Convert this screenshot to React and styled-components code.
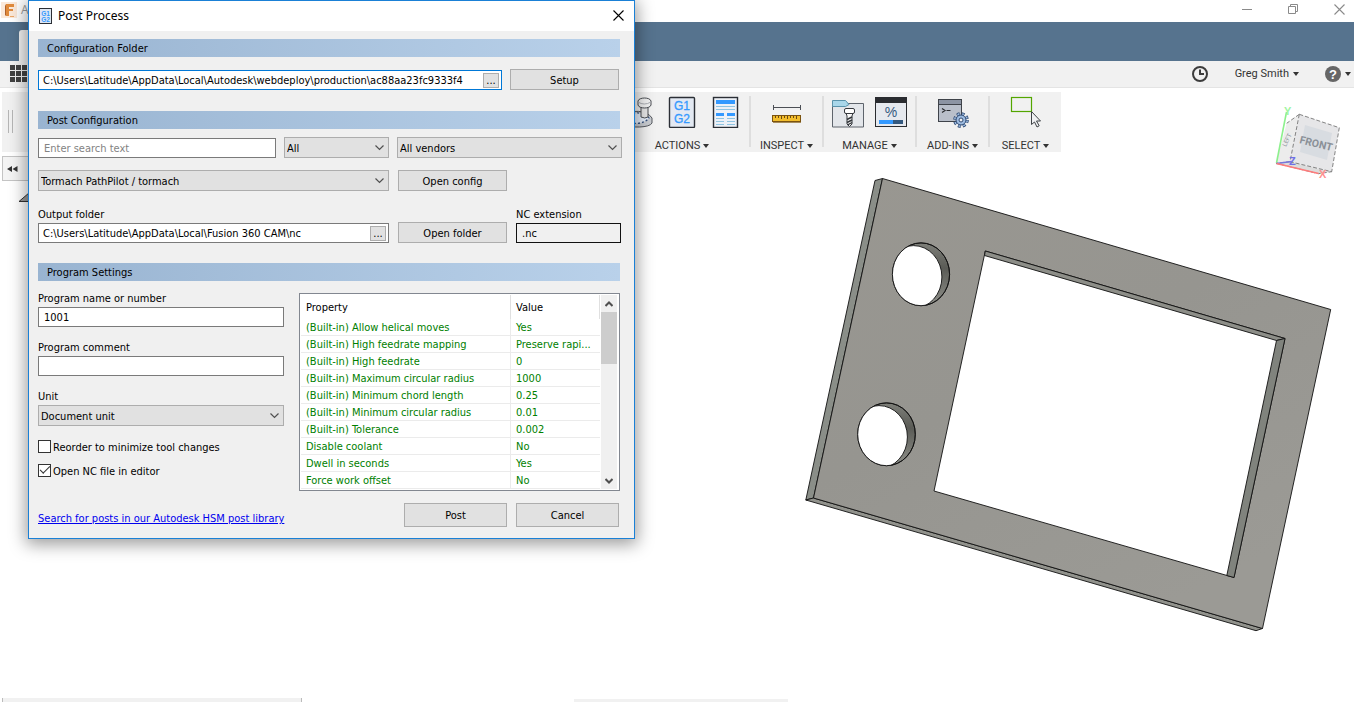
import React, { useState } from 'react'
import styled, { createGlobalStyle } from 'styled-components'

const properties = [
    { name: "(Built-in) Allow helical moves", value: "Yes" },
    { name: "(Built-in) High feedrate mapping", value: "Preserve rapi..." },
    { name: "(Built-in) High feedrate", value: "0" },
    { name: "(Built-in) Maximum circular radius", value: "1000" },
    { name: "(Built-in) Minimum chord length", value: "0.25" },
    { name: "(Built-in) Minimum circular radius", value: "0.01" },
    { name: "(Built-in) Tolerance", value: "0.002" },
    { name: "Disable coolant", value: "No" },
    { name: "Dwell in seconds", value: "Yes" },
    { name: "Force work offset", value: "No" },
]

/* icons */

const IconG1G2 = () => (
    <svg width="32" height="32" viewBox="0 0 32 32">
        <rect x="3.5" y="1.5" width="25" height="30" rx="1" fill="#e3e9f2" stroke="#2b2f36" strokeWidth="1.4" />
        <text x="16" y="14" textAnchor="middle" fontFamily="Liberation Sans, sans-serif" fontSize="12" fill="#3399ff" stroke="#3399ff" strokeWidth="0.3">G1</text>
        <text x="16" y="27" textAnchor="middle" fontFamily="Liberation Sans, sans-serif" fontSize="12" fill="#3399ff" stroke="#3399ff" strokeWidth="0.3">G2</text>
    </svg>
)

const IconDialog = () => (
    <svg width="13" height="16" viewBox="0 0 13 16">
        <rect x=".5" y=".5" width="12" height="15" fill="#dfe7f2" stroke="#2b2f36" />
        <text x="6.500" y="7.500" textAnchor="middle" fontFamily="Liberation Sans, sans-serif" fontWeight="700" fontSize="6.500" fill="#3399ff">G1</text>
        <text x="6.500" y="13.500" textAnchor="middle" fontFamily="Liberation Sans, sans-serif" fontWeight="700" fontSize="6.500" fill="#3399ff">G2</text>
    </svg>
)

const IconStamp = () => (
    <svg width="32" height="32" viewBox="0 0 32 32">
        <path d="M0 20c8-7 24-6 29 2v5c-2 5-21 5-29 2z" fill="#c9ccd1" stroke="#55585e" />
        <path d="M3 21c6-6 20-5 23 1-4 6-17 7-23 3z" fill="#e6eefa" stroke="#33507f" strokeWidth="1.300" strokeDasharray="2 2" />
        <path d="M18 10h7v11q-3 2-7 0z" fill="#e6e6e6" stroke="#4a4d52" />
        <path d="M15 5c1-4 12-4 13 0v4c-1 4-12 4-13 0z" fill="#f0f0f0" stroke="#4a4d52" />
        <path d="M15 6q6 4 13 0" fill="none" stroke="#aaadb2" />
    </svg>
)

const IconSheet = () => (
    <svg width="32" height="32" viewBox="0 0 32 32">
        <rect x="4.500" y="1.500" width="24" height="30" fill="#edf1f7" stroke="#2b2f36" strokeWidth="1.400" />
        <path d="M7 4h19v4H7zM7 17h8v3H7zM18 17h8v3h-8z" fill="#3399ff" />
        <path d="M7 10.500h19M7 13.500h19M7 22.500h8M18 22.500h8M7 25.500h8M18 25.500h8M7 28.500h8M18 28.500h8" stroke="#8fc4e2" />
    </svg>
)

const IconRuler = () => (
    <svg width="32" height="32" viewBox="0 0 32 32">
        <path d="M2 11.500h28M2.500 9v5M29.500 9v5" stroke="#4c4f55" />
        <rect x="1.500" y="19.500" width="28" height="6" fill="#f2bd2c" stroke="#7b5310" />
        <path d="M4.500 20v2M7.500 20v2M10.500 20v3M13.500 20v2M16.500 20v3M19.500 20v2M22.500 20v2M25.500 20v3" stroke="#6b4a12" />
        <path d="M2 26.500h28" stroke="#a58b5c" />
    </svg>
)

const IconToolFolder = () => (
    <svg width="32" height="32" viewBox="0 0 32 32">
        <path d="M.5 31V7.500h31V31z" fill="#e3e6ea" stroke="#5e646c" />
        <path d="M.5 8.500v-4h13l3.500 4-3.500 2H.5z" fill="#a9d7ea" stroke="#5a93ab" />
        <path d="M14 17h7l-1 3v8l-2.500 2.500L15 28v-8z" fill="#f7f7f7" stroke="#35383d" />
        <rect x="12.500" y="12.500" width="10" height="5" rx="1.500" fill="#fff" stroke="#35383d" />
        <path d="M15 23.500l5-2.500M15 26.500l5-2.500M15.500 29l4.500-2.500" stroke="#35383d" strokeWidth="1.400" />
    </svg>
)

const IconPercent = () => (
    <svg width="32" height="32" viewBox="0 0 32 32">
        <rect x=".5" y="1.500" width="31" height="29" fill="#e6e9ee" stroke="#2a2c30" />
        <path d="M0 1h32v6H0z" fill="#2a2c30" />
        <text x="16" y="21" textAnchor="middle" fontFamily="Liberation Sans, sans-serif" fontSize="14" fill="#34597f">%</text>
        <path d="M4 24h14v4H4z" fill="#3399ff" />
        <path d="M18 24h10v4H18z" fill="#34597f" />
    </svg>
)

const IconScript = () => (
    <svg width="32" height="32" viewBox="0 0 32 32">
        <rect x="1.500" y="3.500" width="23" height="22" fill="#b9bfca" stroke="#3f434a" />
        <path d="M2 4h22v4H2z" fill="#8c94a3" />
        <path d="M1 3.500h24M2 8.500h22" stroke="#3f434a" />
        <path d="M5 12.500l3 2-3 2M9.500 14.500h4" fill="none" stroke="#2a2c30" strokeWidth="1.200" />
        <circle cx="24" cy="24" r="6" fill="none" stroke="#2f4a73" strokeWidth="3.600" strokeDasharray="2.700 2.010" />
        <circle cx="24" cy="24" r="6" fill="none" stroke="#9dbbe0" strokeWidth="2" strokeDasharray="1.700 3.010" strokeDashoffset="-0.500" />
        <circle cx="24" cy="24" r="5" fill="#9dbbe0" stroke="#2f4a73" />
        <circle cx="24" cy="24" r="2" fill="#f1f1f1" stroke="#2f4a73" />
    </svg>
)

const IconSelectArrow = () => (
    <svg width="32" height="32" viewBox="0 0 32 32">
        <rect x="1.500" y="1.500" width="20" height="14" fill="none" stroke="#53a600" strokeWidth="1.200" />
        <path d="M21.500 15.500v13l3-2.500 2.500 5 2.200-1.200-2.700-4.800h4z" fill="#f0f1f3" stroke="#3f4347" />
    </svg>
)

const IconGrid = () => (
    <svg width="18" height="18" viewBox="0 0 18 18" fill="#414141">
        {[0, 6, 12].map(y => [0, 6, 12].map(x => (
            <rect key={`${x}-${y}`} x={x} y={y} width="5" height="5" />
        )))}
    </svg>
)

const IconClock = () => (
    <svg width="18" height="18" viewBox="0 0 18 18" fill="none" stroke="#3c3c3c">
        <circle cx="9" cy="9" r="7" strokeWidth="2" />
        <path d="M9 4.500v4.500h4" strokeWidth="2" />
    </svg>
)

const IconHelp = () => (
    <svg width="16" height="16" viewBox="0 0 16 16">
        <circle cx="8" cy="8" r="8" fill="#666" />
        <text x="8" y="12.500" textAnchor="middle" fontFamily="Liberation Sans, sans-serif" fontWeight="700" fontSize="13" fill="#fff">?</text>
    </svg>
)

const IconCaret = () => (
    <svg width="6" height="4" viewBox="0 0 6 4"><path d="M0 0h6L3 4z" fill="#333" /></svg>
)

const IconClose = ({ color = "#8a8a8a" }) => (
    <svg width="11" height="11" viewBox="0 0 11 11" stroke={color} strokeWidth="1.100"><path d="M.5.5l10 10M10.500.5l-10 10" /></svg>
)

const IconRestore = () => (
    <svg width="11" height="11" viewBox="0 0 11 11" fill="none" stroke="#8a8a8a">
        <path d="M.5 2.500h7v7h-7zM2.500 2.500v-2h7v7h-2" />
    </svg>
)

const IconChevron = () => (
    <svg width="9" height="6" viewBox="0 0 9 6" fill="none" stroke="#505050" strokeWidth="1.200"><path d="M.5.5l4 4 4-4" /></svg>
)

const IconScroll = ({ down }) => (
    <svg width="8" height="6" viewBox="0 0 8 6" fill="none" stroke="#505050" strokeWidth="2">
        <path d={down ? "M.5 1L4 4.500 7.500 1" : "M.5 5L4 1.500 7.500 5"} />
    </svg>
)

const IconFusion = () => (
    <svg width="16" height="16" viewBox="0 0 16 16">
        <rect width="16" height="16" fill="#fbe9da" />
        <path d="M5 2h8v3H8v2h4v2H8v5H5z" fill="#e08a3c" />
        <path d="M5 2l-1 2v9l1 1z" fill="#b0622a" />
        <path d="M9 14.500h4" stroke="#eca869" />
    </svg>
)

/* the milled face plate */
const Plate = () => (
    <PlateSvg viewBox="800 172 536 464">
        <defs>
            <linearGradient id="face" x1="0" y1="0" x2="0.600" y2="1">
                <stop offset="0" stopColor="#999791" />
                <stop offset="0.500" stopColor="#969590" />
                <stop offset="1" stopColor="#9b9a95" />
            </linearGradient>
            <linearGradient id="bore" x1="0" y1="0" x2="0" y2="1">
                <stop offset="0" stopColor="#7f807a" />
                <stop offset="0.400" stopColor="#5a5b56" />
                <stop offset="1" stopColor="#90918b" />
            </linearGradient>
            <clipPath id="boreTop"><ellipse cx="921" cy="274.300" rx="28.600" ry="31.400" /></clipPath>
            <clipPath id="boreBottom"><ellipse cx="886.500" cy="434.300" rx="28.800" ry="31.400" /></clipPath>
        </defs>
        <g stroke="#111" strokeWidth="0.900" strokeLinejoin="round">
            <path d="M875 180.500l7.500-2L813.500 498l-7.700 2z" fill="#8a8e88" />
            <path d="M805.800 500l7.700-2 449 130.500-6.500 2.200z" fill="#91928c" />
            <path fillRule="evenodd" fill="url(#face)" d="M882.500 178.500L1330.700 309.500 1262.500 628.500 813.500 498zM985.300 251L934 491l300 86.500 51-239z" />
            <path d="M985.300 251l299.700 87.500-8.500 2L984.500 255.500z" fill="#8d8e88" />
            <path d="M1285 338.500l-8.500 2L1226.800 575.500l7.200 2z" fill="#80837d" />
            <ellipse cx="921" cy="274.300" rx="28.600" ry="31.400" fill="url(#bore)" />
            <ellipse cx="913.500" cy="277" rx="28.400" ry="31.400" fill="#fff" clipPath="url(#boreTop)" />
            <ellipse cx="921" cy="274.300" rx="28.600" ry="31.400" fill="none" />
            <ellipse cx="886.500" cy="434.300" rx="28.800" ry="31.400" fill="url(#bore)" />
            <ellipse cx="879" cy="437" rx="28.400" ry="31.400" fill="#fff" clipPath="url(#boreBottom)" />
            <ellipse cx="886.500" cy="434.300" rx="28.800" ry="31.400" fill="none" />
        </g>
    </PlateSvg>
)

const ViewCube = () => (
    <CubeSvg viewBox="1272 102 72 80">
        <path d="M1299.300 114.300L1286.700 123.300 1276 163.300l14-1.600z" fill="#ececec" />
        <path d="M1276 163.300l14-1.600 41.700 10-13.300 2z" fill="#dcdcdc" />
        <path d="M1299.300 114.300l40 13.400-7.600 44L1290 161.700z" fill="#e6e6e8" />
        <path d="M1305 125l27 8-5 27-27-8z" fill="#d8dce1" />
        <g fill="none" stroke="#777" strokeWidth="0.900" strokeDasharray="4 2">
            <path d="M1299.300 114.300l40 13.400-7.600 44L1290 161.700zM1299.300 114.300L1286.700 123.300M1290 161.700l-14 1.600M1276 163.300l42.400 10.400 13.300-2" />
        </g>
        <text transform="translate(1299 143) rotate(14)" fontFamily="Roboto, sans-serif" fontWeight="700" fontSize="10.500" fill="#8a9097">FRONT</text>
        <text transform="translate(1286 147) rotate(-65)" fontFamily="Roboto, sans-serif" fontSize="6" fill="#8a9097">LEFT</text>
        <path d="M1276.500 163L1286.500 112" stroke="#8df08d" strokeWidth="1.600" />
        <path d="M1276.500 163.500l15-2" stroke="#7777dd" strokeWidth="1.600" />
        <path d="M1276.500 163.500l42 10" stroke="#ff7b7b" strokeWidth="1.600" />
        <g fontFamily="Liberation Sans, sans-serif" fontWeight="700" fontSize="11">
            <text x="1284" y="115" fill="#a0f5a0">Y</text>
            <text x="1289" y="165" fill="#7070e6">Z</text>
            <text x="1319" y="178" fill="#ff9090">X</text>
        </g>
    </CubeSvg>
)

const ToolGroup = ({ label, children }) => (
    <Group>
        <Tools>{children}</Tools>
        <GroupMenu type="button">{label} <IconCaret /></GroupMenu>
    </Group>
)

const Tool = ({ label, children }) => (
    <ToolButton type="button" aria-label={label}>{children}</ToolButton>
)

const DropDown = ({ width, label, id, options }) => (
    <SelectBox $width={width}>
        <select id={id} aria-label={label}>
            {options.map(option => <option key={option}>{option}</option>)}
        </select>
        <IconChevron />
    </SelectBox>
)

const PathField = ({ id, label, value, width, active }) => {
    const [path, setPath] = useState(value)

    return (
        <PathBox $width={width} $active={active}>
            <input id={id} aria-label={label} value={path} onChange={e => setPath(e.target.value)} />
            <BrowseButton type="button">...</BrowseButton>
        </PathBox>
    )
}

const PostDialog = () => {
    const [reorder, setReorder] = useState(false)
    const [openEditor, setOpenEditor] = useState(true)

    return (
        <Dialog role="dialog" aria-label="Post Process">
            <DialogTitle>
                <IconDialog />
                <h1>Post Process</h1>
                <button type="button" aria-label="Close"><IconClose color="#000" /></button>
            </DialogTitle>
            <DialogBody>
                <SectionTitle>Configuration Folder</SectionTitle>
                <Row $top={12}>
                    <PathField active width={464} label="Configuration folder" value="C:\Users\Latitude\AppData\Local\Autodesk\webdeploy\production\ac88aa23fc9333f4" />
                    <Button type="button">Setup</Button>
                </Row>

                <SectionTitle $top={21}>Post Configuration</SectionTitle>
                <Row $top={8}>
                    <TextInput $width={238} aria-label="Search" placeholder="Enter search text" />
                    <DropDown width={105} label="Capabilities" options={["All"]} />
                    <DropDown width={225} label="Vendors" options={["All vendors"]} />
                </Row>
                <Row $top={12} $gap={9}>
                    <DropDown width={351} label="Post processor" options={["Tormach PathPilot / tormach"]} />
                    <Button type="button">Open config</Button>
                </Row>
                <Row $top={15} $gap={9}>
                    <Field>
                        <label htmlFor="output">Output folder</label>
                        <PathField id="output" width={351} value="C:\Users\Latitude\AppData\Local\Fusion 360 CAM\nc" />
                    </Field>
                    <Button type="button">Open folder</Button>
                    <Field>
                        <label htmlFor="extension">NC extension</label>
                        <TextInput id="extension" $width={105} $locked readOnly defaultValue=".nc" />
                    </Field>
                </Row>

                <SectionTitle $top={20}>Program Settings</SectionTitle>
                <Settings>
                    <SettingsForm>
                        <Field>
                            <label htmlFor="name">Program name or number</label>
                            <TextInput id="name" defaultValue="1001" />
                        </Field>
                        <Field>
                            <label htmlFor="comment">Program comment</label>
                            <TextInput id="comment" />
                        </Field>
                        <Field>
                            <label htmlFor="unit">Unit</label>
                            <DropDown id="unit" options={["Document unit"]} />
                        </Field>
                        <CheckLabel>
                            <input type="checkbox" checked={reorder} onChange={() => setReorder(!reorder)} />
                            <span>Reorder to minimize tool changes</span>
                        </CheckLabel>
                        <CheckLabel>
                            <input type="checkbox" checked={openEditor} onChange={() => setOpenEditor(!openEditor)} />
                            <span>Open NC file in editor</span>
                        </CheckLabel>
                    </SettingsForm>
                    <PropertyList>
                        <PropertyTable>
                            <thead>
                                <tr><th>Property</th><th>Value</th></tr>
                            </thead>
                            <tbody>
                                {properties.map(property => (
                                    <tr key={property.name}>
                                        <td>{property.name}</td>
                                        <td>{property.value}</td>
                                    </tr>
                                ))}
                            </tbody>
                        </PropertyTable>
                        <ScrollBar>
                            <button type="button" aria-label="Scroll up"><IconScroll /></button>
                            <Thumb />
                            <button type="button" aria-label="Scroll down"><IconScroll down /></button>
                        </ScrollBar>
                    </PropertyList>
                </Settings>
                <DialogFooter>
                    <a href="#library">Search for posts in our Autodesk HSM post library</a>
                    <Button type="button" $large>Post</Button>
                    <Button type="button" $large>Cancel</Button>
                </DialogFooter>
            </DialogBody>
        </Dialog>
    )
}

const App = () => {
    return (
        <Window>
            <GlobalStyle />
            <TitleBar>
                <IconFusion />
                <span>A</span>
                <WindowButtons>
                    <button type="button" aria-label="Minimize">
                        <svg width="10" height="1"><path d="M0 .5h10" stroke="#8a8a8a" /></svg>
                    </button>
                    <button type="button" aria-label="Restore"><IconRestore /></button>
                    <button type="button" aria-label="Close window"><IconClose /></button>
                </WindowButtons>
            </TitleBar>
            <TabStrip><DocumentTab /></TabStrip>
            <QuickBar>
                <BarButton type="button" aria-label="Data panel"><IconGrid /></BarButton>
                <BarButton type="button" aria-label="Job status" $push><IconClock /></BarButton>
                <BarButton type="button">Greg Smith <IconCaret /></BarButton>
                <BarButton type="button" aria-label="Help"><IconHelp /><IconCaret /></BarButton>
            </QuickBar>
            <Ribbon>
                <Grip />
                <ToolGroup label="ACTIONS">
                    <Tool label="Simulate"><IconStamp /></Tool>
                    <Tool label="Post process"><IconG1G2 /></Tool>
                    <Tool label="Setup sheet"><IconSheet /></Tool>
                </ToolGroup>
                <Separator />
                <ToolGroup label="INSPECT">
                    <Tool label="Measure"><IconRuler /></Tool>
                </ToolGroup>
                <Separator />
                <ToolGroup label="MANAGE">
                    <Tool label="Tool library"><IconToolFolder /></Tool>
                    <Tool label="Task manager"><IconPercent /></Tool>
                </ToolGroup>
                <Separator />
                <ToolGroup label="ADD-INS">
                    <Tool label="Scripts and add-ins"><IconScript /></Tool>
                </ToolGroup>
                <Separator />
                <ToolGroup label="SELECT">
                    <Tool label="Select"><IconSelectArrow /></Tool>
                </ToolGroup>
            </Ribbon>
            <Canvas>
                <Browser>
                    <BrowserHead>
                        <svg width="11" height="6" viewBox="0 0 11 6" fill="#333"><path d="M5 0v6L0 3zM10.500 0v6l-5-3z" /></svg>
                    </BrowserHead>
                    <svg width="12" height="10" viewBox="0 0 12 10"><path d="M11.500.5v9H1z" fill="#999" stroke="#333" /></svg>
                </Browser>
                <Plate />
                <ViewCube />
            </Canvas>
            <BottomBar>
                <CommentsPanel />
                <NavigationBar />
            </BottomBar>
            <PostDialog />
        </Window>
    )
}

export default App

const GlobalStyle = createGlobalStyle`
    * {
        box-sizing: border-box;
    }

    body {
        margin: 0;
        background: #fff;
        color: #000;
        font: 11px/16px "DejaVu Sans Condensed", "DejaVu Sans", sans-serif;
    }

    button, input, select {
        margin: 0;
        font: inherit;
        color: inherit;
    }

    svg {
        display: block;
        flex: none;
    }
`

const Window = styled.div`
    position: relative;
    display: flex;
    flex-direction: column;
    min-height: 100vh;
    overflow: hidden;
`

const TitleBar = styled.header`
    display: flex;
    align-items: center;
    gap: 4px;
    height: 22px;
    padding: 0 0 3px 1px;
    color: #999;
    font: 12px/16px "Open Sans", sans-serif;
`

const WindowButtons = styled.div`
    display: flex;
    gap: 16px;
    margin-left: auto;

    button {
        display: flex;
        align-items: center;
        justify-content: center;
        width: 30px;
        height: 18px;
        padding: 0;
        border: 0;
        background: none;
    }
`

const TabStrip = styled.div`
    display: flex;
    align-items: flex-end;
    height: 39px;
    padding-left: 19px;
    background: #56738e;
`

const DocumentTab = styled.div`
    width: 200px;
    height: 31px;
    border-radius: 3px 3px 0 0;
    background: #f1f1f1;
`

const QuickBar = styled.nav`
    display: flex;
    align-items: center;
    gap: 26px;
    height: 27px;
    padding: 0 3px 0 10px;
    border-bottom: 1px solid #e4e4e4;
    background: #f1f1f1;
`

const BarButton = styled.button`
    display: flex;
    align-items: center;
    gap: 4px;
    margin-left: ${props => props.$push ? "auto" : "0"};
    padding: 0;
    border: 0;
    background: none;
    color: #333;
    font: 11px/14px Roboto, sans-serif;
`

const Ribbon = styled.div`
    display: flex;
    align-self: flex-start;
    height: 60px;
    margin: 4px 0 0 2px;
    background: #f1f1f1;
`

const Grip = styled.div`
    width: 5px;
    height: 23px;
    margin: 18px 602px 0 6px;
    border: solid #b5b5b5;
    border-width: 0 1px;
`

const Group = styled.section`
    display: flex;
    flex-direction: column;
    align-items: center;
    gap: 11px;
    min-width: 71px;
    padding: 4px 8px 0;
`

const Tools = styled.div`
    display: flex;
    gap: 11px;
`

const ToolButton = styled.button`
    padding: 0;
    border: 0;
    background: none;
`

const GroupMenu = styled.button`
    display: flex;
    align-items: center;
    gap: 3px;
    padding: 0;
    border: 0;
    background: none;
    color: #333;
    font: 11px/13px Roboto, sans-serif;
`

const Separator = styled.div`
    width: 2px;
    margin: 4px 0 5px;
    background: #dedede;
`

const Canvas = styled.main`
    position: relative;
    flex: 1;
    min-height: 500px;
`

const PlateSvg = styled.svg`
    position: absolute;
    top: 20px;
    right: 18px;
    width: 536px;
    height: 464px;
`

const CubeSvg = styled.svg`
    position: absolute;
    top: -50px;
    right: 10px;
    width: 72px;
    height: 80px;
`

const Browser = styled.aside`
    display: flex;
    flex-direction: column;
    gap: 11px;
    width: 240px;
    padding: 4px 0 0 2px;

    > svg {
        margin-left: 16px;
    }
`

const BrowserHead = styled.div`
    display: flex;
    align-items: center;
    height: 25px;
    padding-left: 4px;
    border: 1px solid #c4c4c4;
    background: #f4f4f4;
`

const BottomBar = styled.footer`
    display: flex;
    align-items: flex-end;
    gap: 272px;
    height: 4px;
    padding-left: 2px;
`

const CommentsPanel = styled.div`
    width: 300px;
    height: 4px;
    border: solid #bbb;
    border-width: 0 1px;
    background: #f1f1f1;
`

const NavigationBar = styled.div`
    width: 214px;
    height: 3px;
    background: #f1f1f1;
`

/* floats over the CAM workspace */
const Dialog = styled.div`
    position: absolute;
    top: 0;
    left: 28px;
    width: 607px;
    border: 1px solid #1a80d6;
    background: #f0f0f0;
    box-shadow: 0 3px 16px 2px rgba(0, 0, 0, 0.4);
`

const DialogTitle = styled.header`
    display: flex;
    align-items: center;
    gap: 6px;
    height: 30px;
    padding-left: 10px;
    background: #fff;

    h1 {
        margin: 0;
        font: 12px/16px "Noto Sans", sans-serif;
    }

    button {
        display: flex;
        align-items: center;
        justify-content: center;
        width: 31px;
        height: 28px;
        margin: 0 0 2px auto;
        padding: 0;
        border: 0;
        background: none;
    }
`

const DialogBody = styled.form`
    padding: 8px 12px 11px 9px;
`

const SectionTitle = styled.h2`
    height: 18px;
    margin: ${props => props.$top || 0}px 2px 0 0;
    padding-left: 9px;
    background: linear-gradient(to right, #99b4d1, #b9d1ea);
    font-size: 11px;
    font-weight: 400;
    line-height: 20px;
`

const Row = styled.div`
    display: flex;
    align-items: flex-end;
    gap: ${props => props.$gap || 8}px;
    margin-top: ${props => props.$top}px;
`

const Field = styled.div`
    display: flex;
    flex-direction: column;
    gap: 1px;

    label {
        height: 16px;
        line-height: 18px;
    }
`

const TextInput = styled.input`
    width: ${props => props.$width ? `${props.$width}px` : "100%"};
    height: 20px;
    padding: 0 5px;
    border: 1px solid ${props => props.$locked ? "#111" : "#7a7a7a"};
    border-radius: 0;
    outline: 0;
    background: ${props => props.$locked ? "#f0f0f0" : "#fff"};

    &::placeholder {
        color: #838383;
    }
`

const PathBox = styled.div`
    display: flex;
    align-items: center;
    width: ${props => props.$width}px;
    height: 20px;
    padding: 0 2px 0 4px;
    border: 1px solid ${props => props.$active ? "#0078d7" : "#7a7a7a"};
    background: #fff;

    input {
        flex: 1;
        min-width: 0;
        height: 18px;
        padding: 0;
        border: 0;
        outline: 0;
        background: none;
    }
`

const BrowseButton = styled.button`
    width: 16px;
    height: 15px;
    padding: 0;
    border: 1px solid #adadad;
    background: #e1e1e1;
    line-height: 13px;
`

const Button = styled.button`
    flex: none;
    width: ${props => props.$large ? "103px" : "109px"};
    height: ${props => props.$large ? "24px" : "21px"};
    padding: 2px 0 0;
    border: 1px solid #adadad;
    background: #e1e1e1;
`

const SelectBox = styled.div`
    display: grid;
    align-items: center;
    width: ${props => props.$width ? `${props.$width}px` : "100%"};

    select, svg {
        grid-area: 1 / 1;
    }

    select {
        width: 100%;
        height: 21px;
        padding: 2px 20px 0 2px;
        border: 1px solid #adadad;
        border-radius: 0;
        appearance: none;
        background: #e1e1e1;
    }

    svg {
        justify-self: end;
        margin-right: 5px;
        pointer-events: none;
    }
`

const Settings = styled.div`
    display: flex;
    align-items: flex-start;
    gap: 15px;
    margin-top: 9px;
    padding-right: 2px;
`

const SettingsForm = styled.div`
    display: flex;
    flex-direction: column;
    gap: 12px;
    width: 246px;
`

const CheckLabel = styled.label`
    display: flex;
    align-items: center;
    gap: 2px;
    height: 12px;

    &:first-of-type {
        margin-top: 2px;
    }

    span {
        padding-top: 3px;
    }

    input {
        display: grid;
        place-items: center;
        width: 13px;
        height: 13px;
        border: 1px solid #333;
        appearance: none;
        background: #fff;
    }

    input:checked::before {
        content: "";
        width: 9px;
        height: 4px;
        margin-bottom: 3px;
        border: solid #333;
        border-width: 0 0 1px 1px;
        transform: rotate(-45deg);
    }
`

const PropertyList = styled.div`
    display: flex;
    flex: 1;
    height: 198px;
    margin-top: 3px;
    padding: 1px 2px 1px 1px;
    border: 1px solid #828790;
    background: #fff;
`

const PropertyTable = styled.table`
    flex: 1;
    align-self: flex-start;
    border-collapse: separate;
    border-spacing: 0;
    table-layout: fixed;

    th, td {
        height: 17px;
        padding: 2px 0 0 5px;
        border: solid #ebebeb;
        border-width: 0 0 1px;
        line-height: 14px;
        text-align: left;
        white-space: nowrap;
    }

    th {
        height: 24px;
        border-width: 0 1px 0 0;
        border-color: #e0e0e0;
        font-weight: 400;
    }

    th:first-child {
        width: 210px;
    }

    td {
        color: #008000;
    }

    td:first-child {
        border-right-width: 1px;
    }
`

const ScrollBar = styled.div`
    display: flex;
    flex-direction: column;
    width: 16px;
    margin-left: 1px;
    background: #f0f0f0;

    button {
        display: flex;
        align-items: center;
        justify-content: center;
        height: 17px;
        padding: 0;
        border: 0;
        background: none;
    }

    button:last-child {
        margin-top: auto;
    }
`

const Thumb = styled.div`
    height: 52px;
    background: #cdcdcd;
`

const DialogFooter = styled.footer`
    display: flex;
    align-items: center;
    gap: 9px;
    margin-top: 12px;
    padding-right: 3px;

    a {
        margin-right: auto;
        padding-top: 8px;
        color: #0000ee;
    }
`
